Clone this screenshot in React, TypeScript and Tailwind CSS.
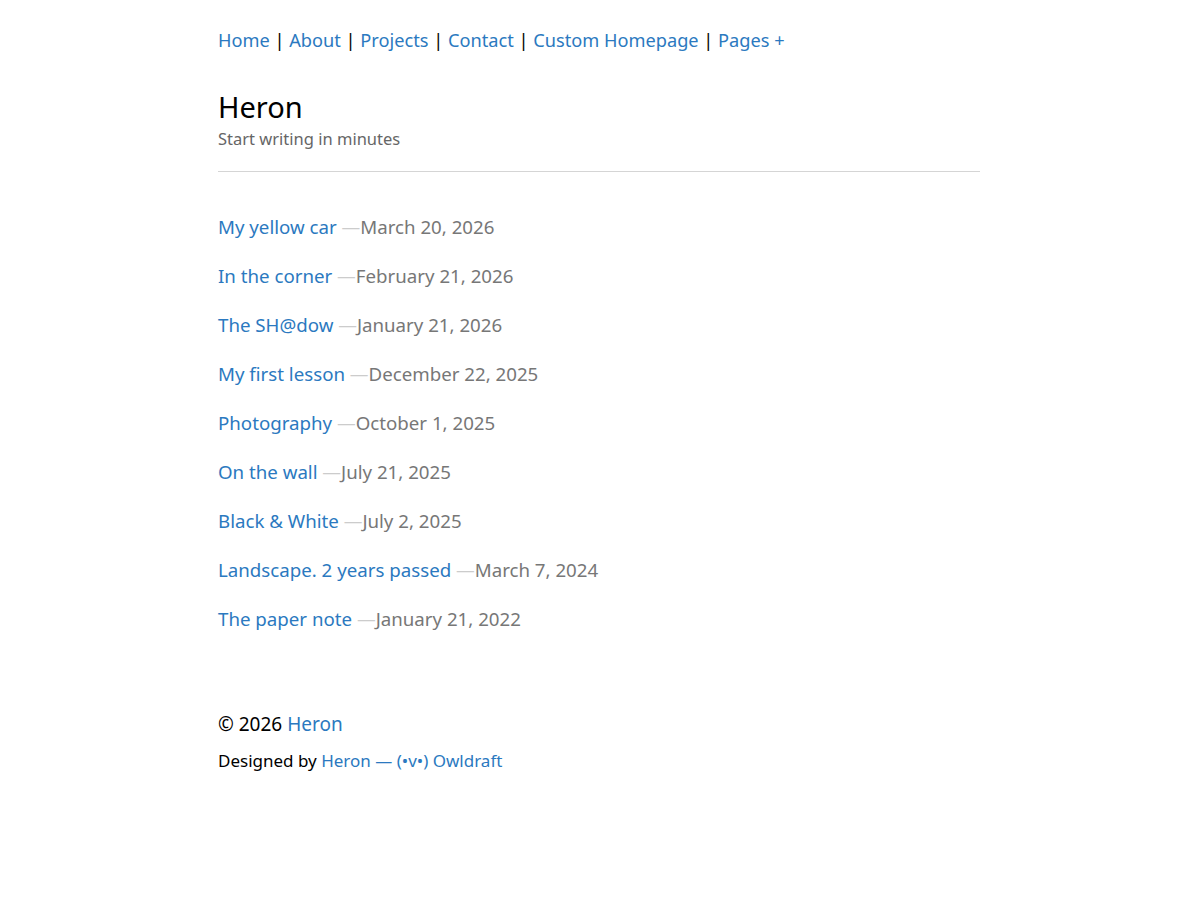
const nav = ["Home", "About", "Projects", "Contact", "Custom Homepage", "Pages +"];

const posts = [
  { title: "My yellow car", date: "March 20, 2026" },
  { title: "In the corner", date: "February 21, 2026" },
  { title: "The SH@dow", date: "January 21, 2026" },
  { title: "My first lesson", date: "December 22, 2025" },
  { title: "Photography", date: "October 1, 2025" },
  { title: "On the wall", date: "July 21, 2025" },
  { title: "Black & White", date: "July 2, 2025" },
  { title: "Landscape. 2 years passed", date: "March 7, 2024" },
  { title: "The paper note", date: "January 21, 2022" },
];

export default function App() {
  return (
    <div className="min-h-screen bg-white font-['Noto_Sans',sans-serif] text-black">
      <div className="mx-auto w-[764px] pr-[2px] pt-[24px]">
        <nav className="text-[18.2px] leading-[32px]">
          {nav.map((item, i) => (
            <span key={item}>
              {i > 0 && <span className="text-black"> | </span>}
              <a href="#" className="text-[#2b79c0]">{item}</a>
            </span>
          ))}
        </nav>

        <header className="mt-[32px] border-b border-[#d5d5d5] pb-[19px]">
          <h1 className="text-[29px] leading-[38px]">Heron</h1>
          <p className="text-[16.5px] leading-[26px] text-[#666]">Start writing in minutes</p>
        </header>

        <ul className="mt-[39px] flex flex-col gap-[17px]">
          {posts.map((p) => (
            <li key={p.title} className="text-[18.7px] leading-[32px]">
              <a href="#" className="text-[#2b79c0]">{p.title}</a>
              <span className="text-[#ccc]"> —</span>
              <span className="text-[#777]">{p.date}</span>
            </li>
          ))}
        </ul>

        <footer className="mt-[74px]">
          <p className="text-[19px] leading-[30px]">
            © 2026 <a href="#" className="text-[#2b79c0]">Heron</a>
          </p>
          <p className="mt-[8px] text-[17px] leading-[28px]">
            Designed by <a href="#" className="text-[#2b79c0]">Heron — (•v•) Owldraft</a>
          </p>
        </footer>
      </div>
    </div>
  );
}
